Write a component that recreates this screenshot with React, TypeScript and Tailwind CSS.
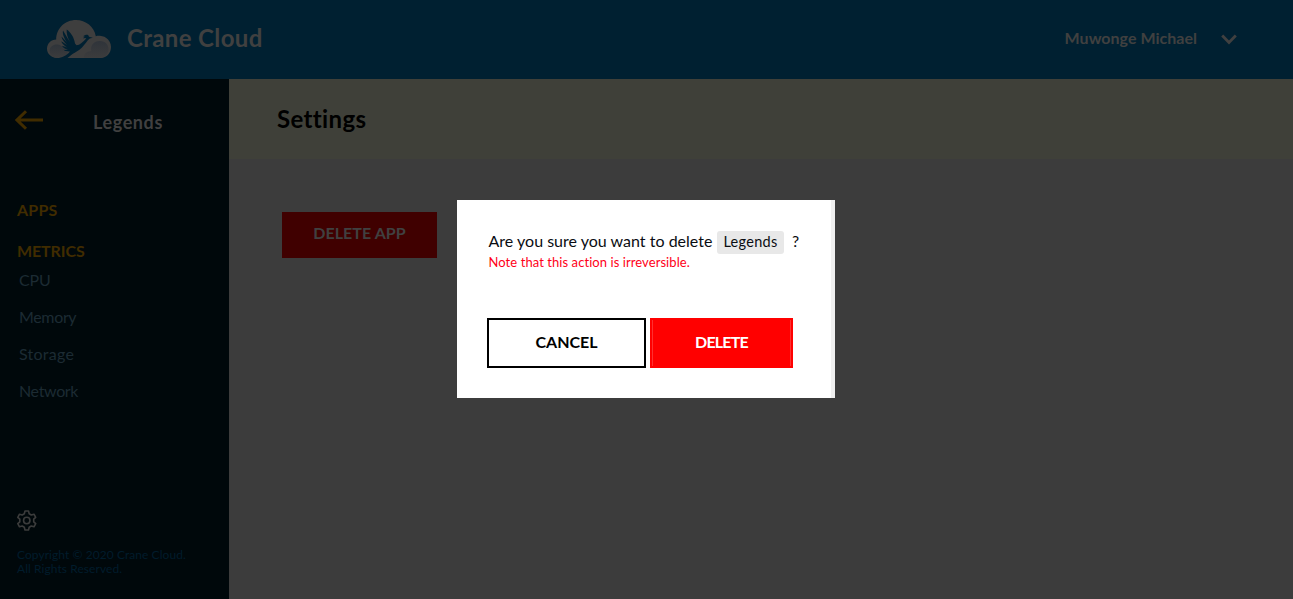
import React from "react";

function CraneLogo() {
  return (
    <svg width="64" height="38" viewBox="0 0 64 38" className="block shrink-0">
      <defs>
        <linearGradient id="puff" x1="0" y1="0" x2="0" y2="1">
          <stop offset="0" stopColor="#2f343a" />
          <stop offset="1" stopColor="#3c3c3d" />
        </linearGradient>
      </defs>
      <path
        fill="#3e3e3e"
        d="M11 38C4.500 38 0 34 0 28.800C0 23.600 4 19.600 9.200 19.500C9.200 8.300 18 0 29 0C38.800 0 47.300 6.800 48.800 16.200C50 15.800 51.500 15.700 53 15.800C59.300 16.300 64 21 64 27C64 33.500 59.500 38 53 38Z"
      />
      <path fill="url(#puff)" d="M2.500 30.500C3 26.500 6.500 24 10.500 24.500C14.500 25 17 27.500 17.500 30.500C20 31 21.500 33 21 35L19 38H11C5.500 38 2.500 34.500 2.500 30.500Z" />
      <path fill="url(#puff)" d="M37 38C36.500 34 40 30.800 44.300 31.300C43 25.500 47 20.800 53 21C58.500 21.200 61.500 25 61.500 29C61.500 34 58 38 53 38Z" />
      <path
        fill="#002031"
        d="M19.700 9.500C23.500 12 27.300 17.500 28 23.500L29.500 25.300C33 24.800 35.500 22 38.300 19.400L39.300 18L35.800 18.300L37.800 16.700L36.300 16.200C38 14.800 40 14.200 41.300 15.200L42 16.700L45.800 17.800L42.800 18.500C40 20.500 38 24.500 35 27.500C31.500 31 28.500 32 25.500 34L20.500 38H12C17 37 20.500 34.500 23 31.500C20 31.700 17.500 31 16.500 29.800L21 29.800C18 29 15.800 27.500 15 25.700L20.500 27.500C17.300 25.800 14.800 23.500 14.300 21.200L20 25C17 22 14.700 19 14.500 16.500L20 22.500C17.200 18.500 15.200 14 16 10.500L21 19L23 22C20.500 17.500 19.300 13 19.700 9.500Z"
      />
    </svg>
  );
}

function Gear() {
  return (
    <svg width="20" height="21" viewBox="0 0 20 21" fill="none" stroke="#3b3c3c" strokeWidth="1.600" strokeLinejoin="round" className="block">
      <path d="M8 1H11.500L12.200 3.800L14.300 5L17 4.200L18.700 7.300L16.700 9.200V11.800L18.700 13.700L17 16.800L14.300 16L12.200 17.200L11.500 20H8L7.300 17.200L5.200 16L2.500 16.800L.8 13.700L2.800 11.800V9.200L.8 7.300L2.500 4.200L5.200 5L7.300 3.800Z" />
      <circle cx="9.750" cy="10.500" r="3.200" />
    </svg>
  );
}

const metrics = [
  { name: "CPU", tracking: "tracking-[-0.2px]" },
  { name: "Memory", tracking: "tracking-[-0.35px]" },
  { name: "Storage", tracking: "tracking-[0.25px]" },
  { name: "Network", tracking: "tracking-[-0.35px]" },
];

export default function App() {
  return (
    <div className="relative flex h-[599px] w-[1293px] flex-col overflow-hidden bg-[#3c3c3c] font-['Lato',sans-serif] [font-variant-ligatures:none]">
      <header className="flex h-[79px] shrink-0 items-center bg-[#002031] pb-[2px] pl-[47px] pr-14 font-bold text-[#404040]">
        <CraneLogo />
        <span className="ml-4 pb-px text-[24px] leading-8 tracking-[0.35px]">Crane Cloud</span>
        <span className="ml-auto pb-[2px] text-base leading-6 tracking-[0.02px]">Muwonge Michael</span>
        <svg width="16" height="11" viewBox="0 0 16 11" className="ml-6 mt-px block" fill="none" stroke="#404040" strokeWidth="2.800">
          <path d="M1.200 1.500L8 8.500L14.800 1.500" />
        </svg>
      </header>
      <div className="flex min-h-0 flex-1">
        <aside className="flex w-[229px] shrink-0 flex-col bg-[#00080b]">
          <div className="flex h-[86px] items-center pl-[15px]">
            <svg width="28" height="20" viewBox="0 0 28 20" fill="none" stroke="#402c00" strokeWidth="3" className="-mt-[4px] block">
              <path d="M28 10H2M11 1.200L2 10L11 18.800" />
            </svg>
            <span className="ml-[50px] text-[18px] font-bold leading-6 tracking-[0.6px] text-[#404040]">Legends</span>
          </div>
          <nav className="flex flex-col pt-[33px]">
            <span className="pl-[17px] text-base font-bold leading-6 tracking-[0.2px] text-[#402c00]">APPS</span>
            <span className="mt-[17px] pl-[17px] text-base font-bold leading-6 tracking-[-0.1px] text-[#402c00]">METRICS</span>
            <ul className="mt-[5px] flex flex-col gap-[13px] pl-[19px] text-base leading-6 text-[#1c2b33]">
              {metrics.map((item) => (
                <li key={item.name} className={item.tracking}>{item.name}</li>
              ))}
            </ul>
          </nav>
          <div className="mt-auto pb-[23px] pl-[17px]">
            <Gear />
            <p className="mt-[17px] text-xs leading-[14px] tracking-[0.06px] text-[#001c2c]">
              Copyright © 2020 Crane Cloud.
              <br />
              All Rights Reserved.
            </p>
          </div>
        </aside>
        <main className="flex flex-1 flex-col">
          <div className="flex h-20 items-center bg-[#3f4039] pl-12">
            <h1 className="text-[24px] font-bold leading-8 tracking-[0.35px] text-black">Settings</h1>
          </div>
          <div className="pl-[53px] pt-[53px]">
            <button className="flex h-[46px] w-[155px] items-center justify-center bg-[#400000] pb-1 text-base font-bold tracking-[0.05px] text-[#404040]">DELETE APP</button>
          </div>
        </main>
      </div>
      <section role="dialog" className="absolute left-[457px] top-[200px] flex h-[198px] w-[378px] flex-col border-r-4 border-[#f0f0f0] bg-white pl-[30px] pt-[31px]">
        <div className="flex h-[23px] items-center pl-[1.500px] text-base text-[#0a0d12]">
          <span className="-mt-[3px] w-[224px] whitespace-nowrap tracking-[0.015px]">Are you sure you want to delete</span>
          <span className="ml-[4.500px] flex h-[23px] w-[67px] items-center justify-center rounded-[3px] bg-[#e8e8e8] pb-px text-[14.500px] tracking-[0.3px]">Legends</span>
          <span className="-mt-[3px] ml-2">?</span>
        </div>
        <p className="-mt-px pl-[1.500px] text-[13px] leading-[18px] tracking-[0.07px] text-[#ff0018]">Note that this action is irreversible.</p>
        <div className="mt-[47px] flex gap-1 text-base font-bold">
          <button className="h-[50px] w-[159px] border-2 border-black bg-white pb-0.5 text-black">CANCEL</button>
          <button className="h-[50px] w-[143px] border-2 border-[#ff0000] bg-[#ff0000] pb-0.5 tracking-[-0.800px] text-white shadow-[inset_1px_0_#ff3030,inset_-1px_0_#ff3030]">DELETE</button>
        </div>
      </section>
    </div>
  );
}
